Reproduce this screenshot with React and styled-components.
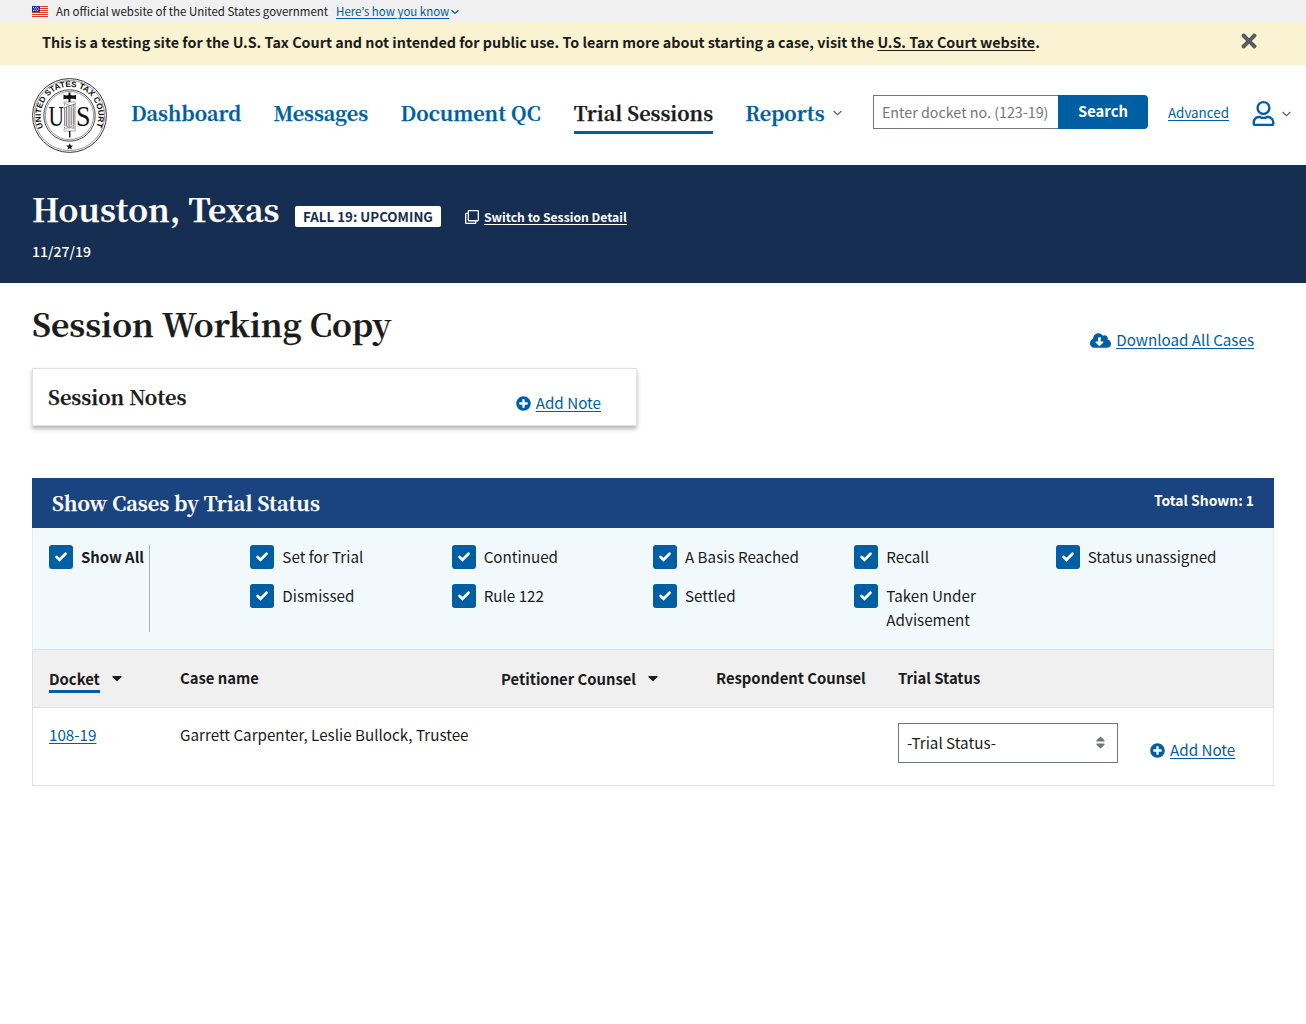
import React from 'react';
import styled, { createGlobalStyle } from 'styled-components';
import {
  FaCaretDown, FaCloudDownloadAlt, FaPlusCircle, FaRegClone, FaRegUser, FaSort, FaTimes,
} from 'react-icons/fa';

const sans = '"Noto Sans CJK KR", "Open Sans", sans-serif';
const serif = '"Noto Serif CJK SC", "Liberation Serif", serif';
const blue = '#005ea2';
const ink = '#1b1b1b';

const GlobalStyle = createGlobalStyle`
  *, *::before, *::after { box-sizing: border-box; }
  body { margin: 0; background: #fff; color: ${ink}; font: 15.2px/24px ${sans}; }
  h1, h2, h3, p { margin: 0; }
  h1, h3, nav a { -webkit-text-stroke: 0.25px currentColor; }
  svg { display: block; flex: none; }
`;

const Link = styled.a`
  color: ${(p) => p.$color || blue};
  font-size: ${(p) => p.$size || 'inherit'};
  text-decoration: underline;
  text-decoration-thickness: 1px;
  text-underline-offset: 2px;
  text-decoration-skip-ink: auto;
  white-space: nowrap;
`;

const IconLink = styled.span`
  display: inline-flex;
  align-items: center;
  gap: 5px;
  color: ${blue};
  line-height: 24px;
`;
const IconLinkText = styled(Link)`
  margin-bottom: 2px;
`;

const GovBanner = styled.div`
  display: flex;
  align-items: center;
  height: 22px;
  padding: 0 32px;
  background: #f0f0f0;
  font-size: 11.47px;
  line-height: 22px;
  white-space: nowrap;
`;
const BannerText = styled.span`
  margin: 0 8px;
`;
const BannerChevron = styled.span`
  margin: 2px 0 0 2px;
  color: ${blue};
`;

const TestNotice = styled.div`
  display: flex;
  justify-content: space-between;
  height: 43px;
  padding: 8px 46px 0 42px;
  background: #faf3d1;
  font-size: 14.33px;
  font-weight: 700;
  white-space: nowrap;
`;
const CloseButton = styled.button`
  height: 22px;
  padding: 0;
  border: 0;
  background: none;
  color: #565c65;
`;

const Header = styled.header`
  display: flex;
  align-items: flex-start;
  height: 100px;
  padding: 13px 16px 0 32px;
`;
const Nav = styled.nav`
  display: flex;
  gap: 32px;
  margin-left: 24px;
  padding-top: 18px;
`;
const NavItem = styled.a`
  display: flex;
  align-items: center;
  width: ${(p) => p.$width}px;
  height: 38px;
  padding-bottom: 1px;
  border-bottom: 3px solid ${(p) => (p.$active ? blue : 'transparent')};
  color: ${(p) => (p.$active ? ink : blue)};
  font: 700 19.85px/32px ${serif};
  white-space: nowrap;
`;
const NavChevron = styled.span`
  margin-left: 8px;
  color: #565c65;
`;
const SearchForm = styled.div`
  display: flex;
  height: 34px;
  margin: 17px 0 0 32px;
`;
const SearchField = styled.input`
  width: 185px;
  height: 34px;
  padding: 0 0 2px 8px;
  border: 1px solid #71767a;
  border-right: 0;
  border-radius: 0;
  background: #fff;
  font: 14.3px/30px ${sans};
  &::placeholder { color: #757575; opacity: 1; }
`;
const SearchButton = styled.button`
  width: 90px;
  height: 34px;
  padding: 0 0 3px;
  border: 0;
  border-radius: 0 4px 4px 0;
  background: ${blue};
  color: #fff;
  font: 700 14.8px/31px ${sans};
`;
const AdvancedSlot = styled.div`
  margin: 21px 22px 0 20px;
`;
const AccountMenu = styled.div`
  display: flex;
  align-items: center;
  gap: 6px;
  margin-top: 23px;
  color: #565c65;
`;

const SessionHeader = styled.section`
  height: 118px;
  padding: 20px 32px 0;
  background: #162e51;
  color: #fff;
`;
const SessionTitleRow = styled.div`
  display: flex;
  align-items: flex-start;
`;
const SessionTitle = styled.h1`
  width: 248px;
  font: 700 31.8px/46px ${serif};
  white-space: nowrap;
`;
const StatusTag = styled.span`
  height: 21px;
  margin: 21px 0 0 15px;
  padding: 0 8px;
  border-radius: 2px;
  background: #fff;
  color: #162e51;
  font-size: 13.34px;
  font-weight: 700;
  line-height: 21px;
`;
const SwitchView = styled.span`
  display: flex;
  align-items: center;
  gap: 5px;
  margin: 20px 0 0 24px;
  font-size: 12.2px;
  font-weight: 700;
`;
const SessionDate = styled.p`
  margin-top: 7px;
  font-size: 14.05px;
  font-weight: 500;
  line-height: 26px;
`;

const Main = styled.main`
  padding: 16px 32px 0;
`;
const TitleBar = styled.div`
  display: flex;
  justify-content: space-between;
  height: 69px;
`;
const PageTitle = styled.h1`
  font: 700 31.9px/48px ${serif};
  white-space: nowrap;
`;
const DownloadSlot = styled.div`
  padding: 28px 20px 0 0;
`;
const NotesCard = styled.section`
  display: flex;
  justify-content: space-between;
  width: 605px;
  height: 58px;
  padding: 12px 35px 0 15px;
  border: 1px solid #dfe1e2;
  box-shadow: 0 3px 4px rgba(0, 0, 0, 0.28);
`;
const NotesTitle = styled.h3`
  font: 700 19.95px/32px ${serif};
`;
const NotesAction = styled.div`
  padding-top: 9px;
`;

const CasesPanel = styled.section`
  margin-top: 52px;
`;
const PanelHeader = styled.div`
  display: flex;
  justify-content: space-between;
  height: 50px;
  padding: 9px 20px 0;
  background: #1a4480;
  color: #fff;
`;
const PanelTitle = styled.h3`
  font: 700 19.92px/32px ${serif};
`;
const TotalShown = styled.span`
  padding-top: 1px;
  font-size: 13.9px;
  font-weight: 700;
`;
const Filters = styled.div`
  display: grid;
  grid-template-columns: repeat(6, 1fr);
  height: 121px;
  padding: 17px 16px 0;
  border: solid #e6ecef;
  border-width: 0 1px;
  background: #f1f9fc;
`;
const FilterColumn = styled.div`
  display: flex;
  flex-direction: column;
  gap: 15px;
`;
const ShowAllColumn = styled.div`
  width: 101px;
  height: 87px;
  border-right: 1px solid #a9aeb1;
`;
const Option = styled.label`
  display: flex;
  gap: 8px;
  font-size: ${(p) => (p.$bold ? '14.85px' : '15.2px')};
  font-weight: ${(p) => (p.$bold ? 700 : 400)};
`;
const OptionText = styled.span`
  max-width: 130px;
  margin-top: ${(p) => (p.$bold ? 0 : -1)}px;
`;
const CheckBox = styled.span`
  display: flex;
  align-items: center;
  justify-content: center;
  flex: none;
  width: 24px;
  height: 24px;
  border-radius: 3px;
  background: ${blue};
  color: #fff;
`;

const CaseTable = styled.div`
  border: 1px solid #dfe1e2;
`;
const CaseRow = styled.div`
  display: grid;
  grid-template-columns: 131px 321px 215px 182px 252px 1fr;
  height: ${(p) => (p.$head ? 58 : 77)}px;
  padding: ${(p) => (p.$head ? '16px' : '15px')} 0 0 16px;
  background: ${(p) => (p.$head ? '#f0f0f0' : '#fff')};
  border-bottom: ${(p) => (p.$head ? '1px solid #dfe1e2' : '0')};
  font-size: ${(p) => (p.$head ? '14.8px' : '15.2px')};
  font-weight: ${(p) => (p.$head ? 700 : 400)};
`;
const HeadCell = styled.div`
  display: flex;
  align-items: flex-start;
  gap: 9px;
  padding-top: ${(p) => (p.$sortable ? 1 : 0)}px;
  line-height: 24px;
  white-space: nowrap;
`;
const SortLabel = styled.span`
  height: 26px;
  border-bottom: ${(p) => (p.$active ? `3px solid ${blue}` : '0')};
`;
const SortIcon = styled.span`
  padding-top: 3px;
`;
const TextCell = styled.div`
  margin-top: -1px;
`;
const StatusSelect = styled.div`
  display: flex;
  align-items: center;
  justify-content: space-between;
  width: 220px;
  height: 40px;
  padding: 0 11px 2px 8px;
  border: 1px solid #71767a;
`;
const SelectArrows = styled.span`
  margin-right: -2px;
  color: #71767a;
`;
const RowAction = styled.div`
  padding-top: 14px;
`;

function Chevron({ width = 9, stroke = 1.1 }) {
  return (
    <svg width={width} height={6} viewBox="0 0 9 6" fill="none" stroke="currentColor" strokeWidth={stroke}>
      <path d="M.6 1 4.5 4.7 8.4 1" />
    </svg>
  );
}

function CheckMark() {
  return (
    <svg width="24" height="24" viewBox="0 0 24 24" fill="none" stroke="#fff" strokeWidth="2.7" strokeLinecap="round">
      <path d="m7.6 12 2.9 2.8 6-6" />
    </svg>
  );
}

function Flag() {
  const stripes = [0, 2, 4, 6, 8, 10];
  const stars = [[1, 1], [3, 1], [5, 1], [2, 2.5], [4, 2.5], [6, 2.5], [1, 4], [3, 4], [5, 4]];
  return (
    <svg width="16" height="11" viewBox="0 0 16 11">
      <rect width="16" height="11" fill="#fff" />
      {stripes.map((y) => <rect key={y} y={y} width="16" height="1.05" fill="#db3e1f" />)}
      <rect width="8" height="6" fill="#1e33b1" />
      {stars.map(([x, y]) => <rect key={`${x}-${y}`} x={x} y={y} width=".9" height=".9" fill="#fff" />)}
    </svg>
  );
}

function Seal() {
  return (
    <svg width="75" height="75" viewBox="0 0 75 75" fill="none" stroke="#333">
      <defs><path id="seal-arc" d="M11.3 49.5A28.8 28.8 0 1 1 63.7 49.5" /></defs>
      <circle cx="37.5" cy="37.5" r="36.9" strokeWidth="1" />
      <circle cx="37.5" cy="37.5" r="35.1" strokeWidth=".5" />
      <circle cx="37.5" cy="37.5" r="25.7" strokeWidth=".9" />
      <circle cx="37.5" cy="37.5" r="24.1" strokeWidth=".5" />
      <text fill="#111" stroke="none" fontFamily="Liberation Sans, sans-serif" fontSize="8" fontWeight="700">
        <textPath href="#seal-arc" startOffset="0" textLength="114" lengthAdjust="spacingAndGlyphs">UNITED STATES TAX COURT</textPath>
      </text>
      <g fill="#111" stroke="none" fontFamily="Liberation Serif, serif" fontSize="29">
        <text x="16.5" y="47.5" textLength="15.5" lengthAdjust="spacingAndGlyphs">U</text>
        <text x="44" y="47.5" textLength="14.5" lengthAdjust="spacingAndGlyphs">S</text>
      </g>
      <path d="M32.5 24.5h10.5v28H32.5z" fill="#ddd" strokeWidth=".5" />
      <path d="M34.5 25v27M37 25v27M39.3 25v27M41.5 25v27" strokeWidth=".8" stroke="#777" />
      <path d="M31.5 24.5H44M31.5 29 44 24.5M31.5 25 44 30M31.5 52H44M31.5 47.5 44 51.5M31.5 51.5 44 46.5" stroke="#fff" strokeWidth="1.8" />
      <path d="M31.5 24H44M31.5 30 44 25.5M31.5 25 44 30M31.5 53H44M31.5 47 44 51.5M31.5 51.5 44 46.5" stroke="#444" strokeWidth=".5" />
      <path d="M31.5 16.5c2 1.2 3.5 1.2 5 .5v-2.5h2V17c2 .7 4 .5 5.5-.3v4.8c-1.5-.8-3.5-1-5.5-.4V24h-2v-2.8c-1.5-.8-3-.8-5 .4z" fill="#111" stroke="none" />
      <path d="M37.7 53v6.5" stroke="#111" strokeWidth="1.4" />
      <path d="m37.7 65.2 1 2.2 2.4.2-1.9 1.6.7 2.3-2.2-1.3-2.2 1.3.7-2.3-1.9-1.6 2.4-.2z" fill="#111" stroke="none" />
    </svg>
  );
}

function FilterOption({ children, bold }) {
  return (
    <Option $bold={bold}>
      <CheckBox><CheckMark /></CheckBox>
      <OptionText $bold={bold}>{children}</OptionText>
    </Option>
  );
}

function AddNote() {
  return (
    <IconLink>
      <FaPlusCircle size={15} />
      <IconLinkText>Add Note</IconLinkText>
    </IconLink>
  );
}

const filterColumns = [
  ['Set for Trial', 'Dismissed'],
  ['Continued', 'Rule 122'],
  ['A Basis Reached', 'Settled'],
  ['Recall', 'Taken Under Advisement'],
  ['Status unassigned'],
];

export default function App() {
  return (
    <>
      <GlobalStyle />
      <GovBanner>
        <Flag />
        <BannerText>An official website of the United States government</BannerText>
        <Link $size="11.47px">Here’s how you know</Link>
        <BannerChevron><Chevron width={8} stroke={1.4} /></BannerChevron>
      </GovBanner>
      <TestNotice>
        <p>
          This is a testing site for the U.S. Tax Court and not intended for public use. To learn more about
          starting a case, visit the <Link $color={ink}>U.S. Tax Court website</Link>.
        </p>
        <CloseButton aria-label="Close"><FaTimes size={22} /></CloseButton>
      </TestNotice>
      <Header>
        <Seal />
        <Nav>
          <NavItem $width={110.4}>Dashboard</NavItem>
          <NavItem $width={95.2}>Messages</NavItem>
          <NavItem $width={141.2}>Document QC</NavItem>
          <NavItem $width={139.4} $active>Trial Sessions</NavItem>
          <NavItem $width={95.8}>Reports<NavChevron><Chevron /></NavChevron></NavItem>
        </Nav>
        <SearchForm>
          <SearchField placeholder="Enter docket no. (123-19)" />
          <SearchButton>Search</SearchButton>
        </SearchForm>
        <AdvancedSlot><Link $size="13.38px">Advanced</Link></AdvancedSlot>
        <AccountMenu>
          <FaRegUser size={25} color={blue} />
          <Chevron />
        </AccountMenu>
      </Header>
      <SessionHeader>
        <SessionTitleRow>
          <SessionTitle>Houston, Texas</SessionTitle>
          <StatusTag>FALL 19: UPCOMING</StatusTag>
          <SwitchView><FaRegClone size={14} /><Link $color="#fff">Switch to Session Detail</Link></SwitchView>
        </SessionTitleRow>
        <SessionDate>11/27/19</SessionDate>
      </SessionHeader>
      <Main>
        <TitleBar>
          <PageTitle>Session Working Copy</PageTitle>
          <DownloadSlot>
            <IconLink><FaCloudDownloadAlt size={21} /><IconLinkText>Download All Cases</IconLinkText></IconLink>
          </DownloadSlot>
        </TitleBar>
        <NotesCard>
          <NotesTitle>Session Notes</NotesTitle>
          <NotesAction><AddNote /></NotesAction>
        </NotesCard>
        <CasesPanel>
          <PanelHeader>
            <PanelTitle>Show Cases by Trial Status</PanelTitle>
            <TotalShown>Total Shown: 1</TotalShown>
          </PanelHeader>
          <Filters>
            <ShowAllColumn><FilterOption bold>Show All</FilterOption></ShowAllColumn>
            {filterColumns.map((column) => (
              <FilterColumn key={column[0]}>
                {column.map((name) => <FilterOption key={name}>{name}</FilterOption>)}
              </FilterColumn>
            ))}
          </Filters>
          <CaseTable>
            <CaseRow $head>
              <HeadCell $sortable>
                <SortLabel $active>Docket</SortLabel>
                <SortIcon><FaCaretDown size={16} /></SortIcon>
              </HeadCell>
              <HeadCell>Case name</HeadCell>
              <HeadCell $sortable>
                <SortLabel>Petitioner Counsel</SortLabel>
                <SortIcon><FaCaretDown size={16} /></SortIcon>
              </HeadCell>
              <HeadCell>Respondent Counsel</HeadCell>
              <HeadCell>Trial Status</HeadCell>
            </CaseRow>
            <CaseRow>
              <TextCell><Link>108-19</Link></TextCell>
              <TextCell>Garrett Carpenter, Leslie Bullock, Trustee</TextCell>
              <div />
              <div />
              <StatusSelect>-Trial Status-<SelectArrows><FaSort size={15} /></SelectArrows></StatusSelect>
              <RowAction><AddNote /></RowAction>
            </CaseRow>
          </CaseTable>
        </CasesPanel>
      </Main>
    </>
  );
}
